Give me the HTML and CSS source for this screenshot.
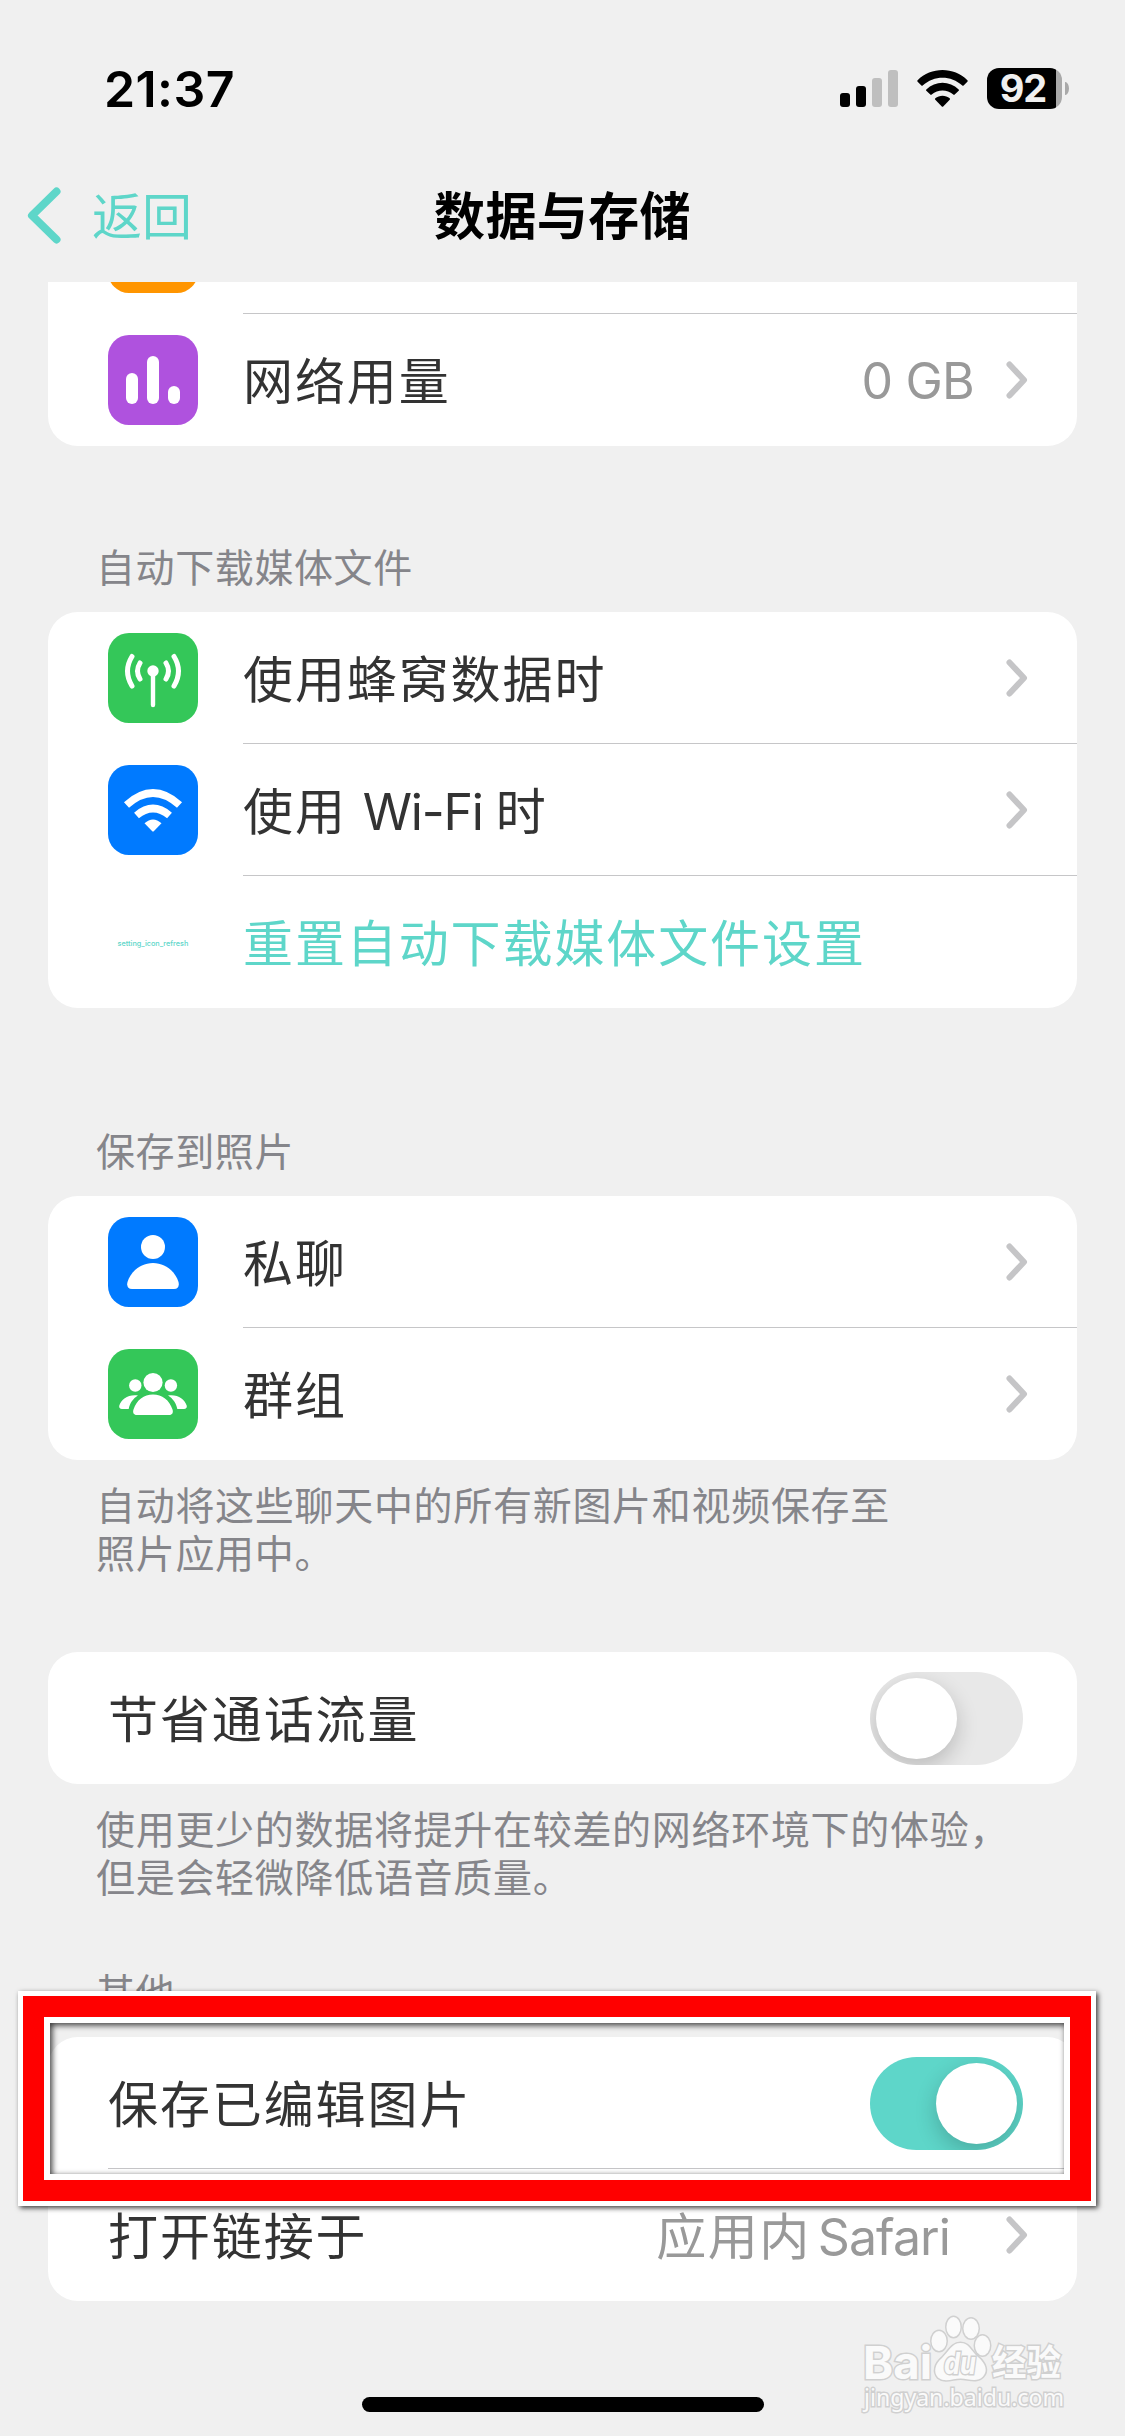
FILE: index.html
```html
<!DOCTYPE html>
<html lang="zh-CN">
<head>
    <meta charset="UTF-8">
    <title>数据与存储</title>
    <meta name="viewport" content="width=device-width, initial-scale=1.0">
    <link rel="stylesheet" href="styles.css">
</head>
<body>
    <div class="screen">
        <div class="status-bar">
            <span class="time">21:37</span>
            <div class="status-icons">
                <svg class="signal" width="58" height="37" viewBox="0 0 58 37">
                    <rect x="0" y="23" width="10" height="14" rx="3"/>
                    <rect x="16" y="16" width="10" height="21" rx="3"/>
                    <rect x="32" y="8" width="10" height="29" rx="3" fill="#bfbfbf"/>
                    <rect x="48" y="0" width="10" height="37" rx="3" fill="#bfbfbf"/>
                </svg>
                <svg class="wifi" width="51" height="37" viewBox="0 0 51 37">
                    <path d="M0.6 10.3C14 -3.4 37 -3.4 50.4 10.3Q51 11 50.4 11.7L46.6 15.5Q46 16 45.3 15.5C34 5 17 5 5.7 15.5Q5 16 4.4 15.5L0.6 11.7Q0 11 0.6 10.3Z"/>
                    <path d="M9.3 19.4C18.5 10.6 32.5 10.6 41.7 19.4Q42.3 20 41.7 20.7L37.7 24.6Q37 25.2 36.3 24.6C30 19.2 21 19.2 14.7 24.6Q14 25.2 13.3 24.6L9.3 20.7Q8.7 20 9.3 19.4Z"/>
                    <path d="M18.3 28.3C22.3 24.8 28.7 24.8 32.7 28.3Q33.4 29 32.7 29.8L26.2 36.4Q25.5 37 24.8 36.4L18.3 29.8Q17.6 29 18.3 28.3Z"/>
                </svg>
                <div class="battery"><span>92</span></div>
            </div>
        </div>

        <div class="nav-bar">
            <div class="back">
                <svg width="34" height="57" viewBox="0 0 34 57"><path d="M29.5 4.5L5 28.5L29.5 52.5"/></svg>
                <span>返回</span>
            </div>
            <h1>数据与存储</h1>
        </div>

        <div class="content">
            <div class="card card-usage">
                <div class="row">
                    <div class="icon orange"></div>
                    <div class="row-body"></div>
                </div>
                <div class="row">
                    <div class="icon purple">
                        <svg viewBox="0 0 90 90">
                            <rect x="18" y="38" width="12" height="31" rx="6"/>
                            <rect x="39" y="21" width="12" height="48" rx="6"/>
                            <rect x="60" y="51" width="12" height="18" rx="6"/>
                        </svg>
                    </div>
                    <div class="row-body">
                        <span>网络用量</span>
                        <span class="value">0 GB</span>
                        <svg class="chevron" viewBox="0 0 22 38"><path d="M3.5 3.5L18 19L3.5 34.5"/></svg>
                    </div>
                </div>
            </div>

            <h2>自动下载媒体文件</h2>
            <div class="card card-download">
                <div class="row">
                    <div class="icon green">
                        <svg viewBox="0 0 90 90">
                            <circle cx="45" cy="38" r="5.7"/>
                            <path class="line" d="M45 40V72" stroke-width="4.4"/>
                            <path class="line" d="M24 23.5Q15 38 24 53M66 23.5Q75 38 66 53M32 30Q27 38 32 46M58 30Q63 38 58 46" stroke-width="5"/>
                        </svg>
                    </div>
                    <div class="row-body">
                        <span>使用蜂窝数据时</span>
                        <svg class="chevron" viewBox="0 0 22 38"><path d="M3.5 3.5L18 19L3.5 34.5"/></svg>
                    </div>
                </div>
                <div class="row">
                    <div class="icon blue">
                        <svg viewBox="0 0 90 90">
                            <path class="line flat" d="M18.5 40Q45 16 71.5 40" stroke-width="7.5"/>
                            <path class="line flat" d="M28.5 50.5Q45 36.5 61.5 50.5" stroke-width="7.5"/>
                            <path d="M36.5 58.3Q45 50.5 53.5 58.3L46 66Q45 67 44 66Z"/>
                        </svg>
                    </div>
                    <div class="row-body">
                        <span>使用 <span class="latin">Wi-Fi </span>时</span>
                        <svg class="chevron" viewBox="0 0 22 38"><path d="M3.5 3.5L18 19L3.5 34.5"/></svg>
                    </div>
                </div>
                <div class="row">
                    <div class="icon missing">setting_icon_refresh</div>
                    <div class="row-body accent">
                        <span>重置自动下载媒体文件设置</span>
                    </div>
                </div>
            </div>

            <h2>保存到照片</h2>
            <div class="card">
                <div class="row">
                    <div class="icon blue">
                        <svg viewBox="0 0 90 90">
                            <circle cx="45" cy="30" r="12"/>
                            <path d="M24 72C20 72 18.5 69 19.5 65C23 54 33 46 45 46C57 46 67 54 70.5 65C71.5 69 70 72 66 72Z"/>
                        </svg>
                    </div>
                    <div class="row-body">
                        <span>私聊</span>
                        <svg class="chevron" viewBox="0 0 22 38"><path d="M3.5 3.5L18 19L3.5 34.5"/></svg>
                    </div>
                </div>
                <div class="row">
                    <div class="icon green">
                        <svg viewBox="0 0 90 90">
                            <circle cx="45" cy="33.5" r="9.6"/>
                            <circle cx="27.3" cy="36.5" r="6.2"/>
                            <circle cx="62.9" cy="36.5" r="6.2"/>
                            <path d="M29 66C25.5 66 24.5 63.5 25.5 60.5C28.5 51 36 45.5 45 45.5C54 45.5 61.5 51 64.5 60.5C65.5 63.5 64.5 66 61 66Z"/>
                            <path d="M30 46.5C20.5 45 13.5 50 11.3 56.5C10.7 58.8 12 60 14 60H20.7C21.7 54.5 25 49.5 30 46.5Z"/>
                            <path d="M60 46.5C69.5 45 76.5 50 78.7 56.5C79.3 58.8 78 60 76 60H69.3C68.3 54.5 65 49.5 60 46.5Z"/>
                        </svg>
                    </div>
                    <div class="row-body">
                        <span>群组</span>
                        <svg class="chevron" viewBox="0 0 22 38"><path d="M3.5 3.5L18 19L3.5 34.5"/></svg>
                    </div>
                </div>
            </div>
            <p class="note">自动将这些聊天中的所有新图片和视频保存至<br>照片应用中。</p>

            <div class="card card-calls">
                <div class="row plain">
                    <div class="row-body">
                        <span>节省通话流量</span>
                        <div class="toggle"></div>
                    </div>
                </div>
            </div>
            <p class="note">使用更少的数据将提升在较差的网络环境下的体验，<br>但是会轻微降低语音质量。</p>

            <h2 class="other">其他</h2>
            <div class="card">
                <div class="row plain">
                    <div class="row-body">
                        <span>保存已编辑图片</span>
                        <div class="toggle on"></div>
                    </div>
                </div>
                <div class="row plain">
                    <div class="row-body">
                        <span>打开链接于</span>
                        <span class="value wide">应用内<span class="latin"> Safari</span></span>
                        <svg class="chevron" viewBox="0 0 22 38"><path d="M3.5 3.5L18 19L3.5 34.5"/></svg>
                    </div>
                </div>
            </div>
        </div>

        <!-- Highlight around the toggle row -->
        <div class="highlight"><div class="highlight-red"><div class="highlight-hole"></div></div></div>

        <svg class="watermark" width="240" height="110" viewBox="0 0 240 110">
            <text x="6" y="66" class="brand" textLength="69" lengthAdjust="spacingAndGlyphs">Bai</text>
            <g>
                <ellipse cx="82" cy="28" rx="7.5" ry="10"/>
                <ellipse cx="96.5" cy="14" rx="7" ry="10"/>
                <ellipse cx="114" cy="15.5" rx="7.5" ry="10"/>
                <ellipse cx="125.5" cy="32.5" rx="7.5" ry="10"/>
                <path d="M103.5 30C112 30 114 38 121 44C129 51 131 58 126 63.5C120 70 111 65.5 103.5 65.5C96 65.5 88 70 81 64.5C76 59 78 51 85 45C92 38 95 30 103.5 30Z"/>
            </g>
            <text x="87" y="61" class="du" textLength="32" lengthAdjust="spacingAndGlyphs">du</text>
            <text x="135" y="63" class="cn" textLength="69" lengthAdjust="spacingAndGlyphs">经验</text>
            <text x="7" y="93" class="url" textLength="200" lengthAdjust="spacingAndGlyphs">jingyan.baidu.com</text>
        </svg>

        <div class="home-indicator"></div>
    </div>
</body>
</html>
```
FILE: styles.css
```css
* {
    box-sizing: border-box;
}

body {
    margin: 0;
    background: #f0f0f0;
    font-family: Inter, 'Noto Sans CJK SC', sans-serif;
    color: #333;
}

.screen {
    position: relative;
    width: 1125px;
    height: 2436px;
    overflow: hidden;
    display: flex;
    flex-direction: column;
}

.status-bar {
    height: 148px;
    padding: 29px 63px 0 104px;
    display: flex;
    justify-content: space-between;
    align-items: center;
    color: #000;
}

.time {
    font-size: 50px;
    font-weight: 600;
    line-height: 60px;
    letter-spacing: 0.4px;
}

.status-icons {
    display: flex;
    align-items: center;
}

.wifi {
    margin: 0 19px;
}

.battery {
    position: relative;
    width: 75px;
    height: 41px;
    padding-right: 3px;
    border-radius: 12px;
    background: linear-gradient(to right, #000 69px, #a9a9a9 69px);
    color: #f0f0f0;
    font-size: 38px;
    font-weight: 700;
    line-height: 41px;
    letter-spacing: -1px;
    text-align: center;
}

.battery::after {
    content: '';
    position: absolute;
    left: 78px;
    top: 14px;
    width: 4px;
    height: 13px;
    border-radius: 0 4px 4px 0 / 0 7px 7px 0;
    background: #a9a9a9;
}

.nav-bar {
    height: 134px;
    display: grid;
    grid-template-columns: 1fr auto 1fr;
    align-items: center;
    color: #000;
}

.back {
    display: flex;
    align-items: center;
    gap: 31px;
    padding-left: 27px;
    font-size: 50px;
    line-height: 60px;
    color: #5ed6c9;
}

.back span {
    padding-top: 3px;
}

.back svg {
    fill: none;
    stroke: #5ed6c9;
    stroke-width: 8;
    stroke-linecap: round;
    stroke-linejoin: round;
}

h1 {
    margin: 0;
    padding-top: 4px;
    font-size: 51px;
    font-weight: 700;
    line-height: 60px;
    letter-spacing: 0.4px;
}

.content {
    flex: 1;
    padding: 0 48px;
    overflow: hidden;
}

.card {
    border-radius: 30px;
    background: #fff;
    overflow: hidden;
}

/* scrolled partly under the nav bar */
.card-usage {
    margin-top: -100px;
}

h2 {
    height: 166px;
    margin: 0;
    padding: 93px 48px 0;
    font-size: 39px;
    font-weight: 400;
    line-height: 58px;
    letter-spacing: 0.6px;
    color: #85858a;
}

.card-download + h2 {
    height: 188px;
    padding-top: 115px;
}

.row {
    height: 132px;
    padding-left: 60px;
    display: flex;
    align-items: center;
}

.row-body {
    flex: 1;
    height: 132px;
    margin-left: 45px;
    padding-right: 49px;
    display: flex;
    align-items: center;
    border-bottom: 1px solid #c6c6c8;
    font-size: 50px;
    letter-spacing: 1.9px;
}

.row-body > span {
    padding-bottom: 4px;
    white-space: nowrap;
}

.row:last-child .row-body {
    border-bottom-color: transparent;
}

.row-body > :first-child {
    margin-right: auto;
}

.plain .row-body {
    margin-left: 0;
    padding-right: 54px;
}

.plain .chevron {
    margin-right: -5px;
}

.accent {
    color: #5ed6c9;
}

.latin {
    letter-spacing: -1.2px;
}

.row-body > .value {
    padding: 3px 0 0;
    margin-right: 32px;
    color: #999;
    letter-spacing: -0.8px;
}

.row-body > .value.wide {
    padding: 0 0 4px;
    margin-right: 56px;
    letter-spacing: 1.4px;
}

.value .latin {
    letter-spacing: -0.9px;
    word-spacing: -6px;
}

.chevron {
    width: 22px;
    height: 38px;
    fill: none;
    stroke: #c5c5c7;
    stroke-width: 6;
    stroke-linecap: round;
    stroke-linejoin: round;
}

.icon {
    width: 90px;
    height: 90px;
    border-radius: 21px;
    overflow: hidden;
}

.icon svg {
    display: block;
    width: 90px;
    height: 90px;
    fill: #fff;
}

.icon .line {
    fill: none;
    stroke: #fff;
    stroke-linecap: round;
}

.icon .flat {
    stroke-linecap: butt;
}

.orange { background: #ff9500; }
.purple { background: #af52de; }
.green { background: #34c759; }
.blue { background: #007aff; }

.missing {
    padding-top: 1px;
    font-size: 7.3px;
    font-weight: 500;
    line-height: 92px;
    text-align: center;
    color: #5ed6c9;
    border-radius: 0;
}

.note {
    height: 192px;
    margin: 0;
    padding: 22px 48px 0;
    font-size: 39px;
    line-height: 48px;
    letter-spacing: 0.7px;
    color: #85858a;
    white-space: nowrap;
}

.card-calls + .note {
    height: 170px;
}

.other {
    height: 83px;
    padding-top: 10px;
}

.toggle {
    width: 153px;
    height: 93px;
    margin-top: 2px;
    padding: 6px;
    border-radius: 47px;
    background: #e8e8e8;
    overflow: hidden;
    display: flex;
}

.toggle::before {
    content: '';
    width: 81px;
    height: 81px;
    border-radius: 50%;
    background: #fff;
    box-shadow: 0 8px 22px rgba(0, 0, 0, 0.2);
}

.toggle.on {
    background: #5ed6c9;
    justify-content: flex-end;
}

/* only the ring is painted, the middle stays see-through */
.highlight {
    position: absolute;
    left: 18px;
    top: 1991px;
    width: 1078px;
    height: 215px;
    border: 5px solid #fff;
    box-shadow: 2px 2px 5px rgba(0, 0, 0, 0.75);
}

.highlight-red {
    height: 100%;
    border: 21px solid #f00;
}

.highlight-hole {
    height: 100%;
    border: 6px solid #fff;
    box-shadow: inset 2px 2px 6px rgba(0, 0, 0, 0.8);
}

.watermark {
    position: absolute;
    left: 857px;
    top: 2313px;
    fill: #fafafa;
    stroke: #d0d0d0;
    stroke-width: 3;
    paint-order: stroke;
    overflow: visible;
}

.watermark .brand {
    font: 700 45px Inter, sans-serif;
}

.watermark .du {
    font: italic 700 30px Inter, sans-serif;
}

.watermark .cn {
    font: 700 36px 'Noto Sans CJK SC', sans-serif;
}

.watermark .url {
    font: 400 24px 'Noto Sans', sans-serif;
}

.home-indicator {
    position: absolute;
    left: 362px;
    bottom: 24px;
    width: 402px;
    height: 15px;
    border-radius: 8px;
    background: #000;
}
```
